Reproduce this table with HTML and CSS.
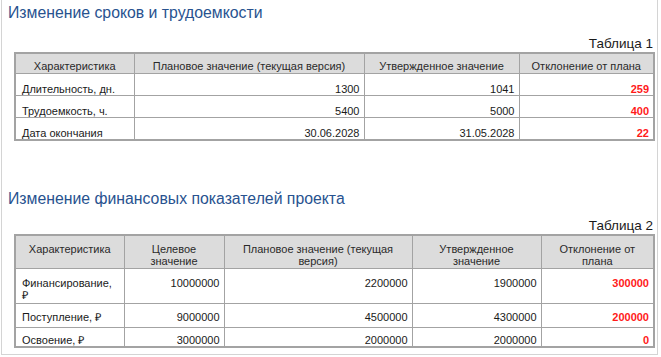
FILE: index.html
```html
<!DOCTYPE html>
<html lang="ru">
<head>
<meta charset="utf-8">
<title>Изменение сроков и трудоемкости</title>
<link rel="stylesheet" href="styles.css">
</head>
<body>
<div class="frame">
  <h2 class="title">Изменение сроков и трудоемкости</h2>
  <div class="caption caption-1">Таблица 1</div>
  <table class="grid grid-1">
    <colgroup>
      <col class="c1-1"><col class="c1-2"><col class="c1-3"><col class="c1-4">
    </colgroup>
    <thead>
      <tr>
        <th>Характеристика</th>
        <th>Плановое значение (текущая версия)</th>
        <th>Утвержденное значение</th>
        <th>Отклонение от плана</th>
      </tr>
    </thead>
    <tbody>
      <tr>
        <td>Длительность, дн.</td>
        <td class="num">1300</td>
        <td class="num">1041</td>
        <td class="num red">259</td>
      </tr>
      <tr>
        <td>Трудоемкость, ч.</td>
        <td class="num">5400</td>
        <td class="num">5000</td>
        <td class="num red">400</td>
      </tr>
      <tr>
        <td>Дата окончания</td>
        <td class="num">30.06.2028</td>
        <td class="num">31.05.2028</td>
        <td class="num red">22</td>
      </tr>
    </tbody>
  </table>

  <h2 class="title title-2">Изменение финансовых показателей проекта</h2>
  <div class="caption caption-2">Таблица 2</div>
  <table class="grid grid-2">
    <colgroup>
      <col class="c2-1"><col class="c2-2"><col class="c2-3"><col class="c2-4"><col class="c2-5">
    </colgroup>
    <thead>
      <tr>
        <th>Характеристика</th>
        <th>Целевое<br>значение</th>
        <th>Плановое значение (текущая<br>версия)</th>
        <th>Утвержденное<br>значение</th>
        <th>Отклонение от<br>плана</th>
      </tr>
    </thead>
    <tbody>
      <tr class="r-tall">
        <td>Финансирование,<br>₽</td>
        <td class="num">10000000</td>
        <td class="num">2200000</td>
        <td class="num">1900000</td>
        <td class="num red">300000</td>
      </tr>
      <tr class="r-mid">
        <td>Поступление, ₽</td>
        <td class="num">9000000</td>
        <td class="num">4500000</td>
        <td class="num">4300000</td>
        <td class="num red">200000</td>
      </tr>
      <tr class="r-last">
        <td>Освоение, ₽</td>
        <td class="num">3000000</td>
        <td class="num">2000000</td>
        <td class="num">2000000</td>
        <td class="num red">0</td>
      </tr>
    </tbody>
  </table>
</div>
</body>
</html>
```

FILE: styles.css
```css
html, body {
  margin: 0;
  padding: 0;
  background: #ffffff;
}

body {
  font-family: "Liberation Sans", Arial, sans-serif;
  color: #1a1a1a;
}

.frame {
  width: 645px;
  height: 354px;
  margin-left: 1px;
  border: 1px solid #d4d4d4;
  border-top: none;
  padding: 0 4px 0 6px;
  overflow: hidden;
}

.title {
  margin: 3px 0 0 0;
  font-size: 15.8px;
  line-height: 19px;
  font-weight: normal;
  color: #28528f;
}

.title-2 {
  margin-top: 48px;
}

.caption {
  text-align: right;
  font-size: 13.5px;
  line-height: 16px;
  color: #1a1a1a;
}

.caption-1 {
  margin-top: 14px;
}

.caption-2 {
  margin-top: 10px;
}

.grid {
  margin-left: 6px;
  width: 639px;
  border-collapse: collapse;
  table-layout: fixed;
  border: 2px solid #a3a3a3;
  font-size: 11px;
  line-height: 12px;
}

.grid th,
.grid td {
  border: 1px solid #a3a3a3;
  vertical-align: top;
  white-space: nowrap;
  overflow: hidden;
}

.grid th {
  background: #dcdcdc;
  font-weight: normal;
  text-align: center;
  color: #2a2a2a;
  padding: 6px 4px 1px 4px;
}

.grid td {
  padding: 9px 4px 0 6px;
}

.grid-2 th {
  padding: 7px 4px 1px 4px;
}

.grid-2 .r-tall td {
  padding: 8px 4px 2px 6px;
}

.grid-2 .r-mid td {
  padding: 7px 4px 4px 6px;
}

.grid-2 .r-last td {
  padding: 6px 4px 0 6px;
}

.grid .num {
  text-align: right;
}

.grid .red {
  color: #ff1a1a;
  font-weight: bold;
}

.c1-1 { width: 119px; }
.c1-2 { width: 230px; }
.c1-3 { width: 155px; }
.c1-4 { width: 135px; }

.c2-1 { width: 109px; }
.c2-2 { width: 100px; }
.c2-3 { width: 188px; }
.c2-4 { width: 129px; }
.c2-5 { width: 113px; }
```
